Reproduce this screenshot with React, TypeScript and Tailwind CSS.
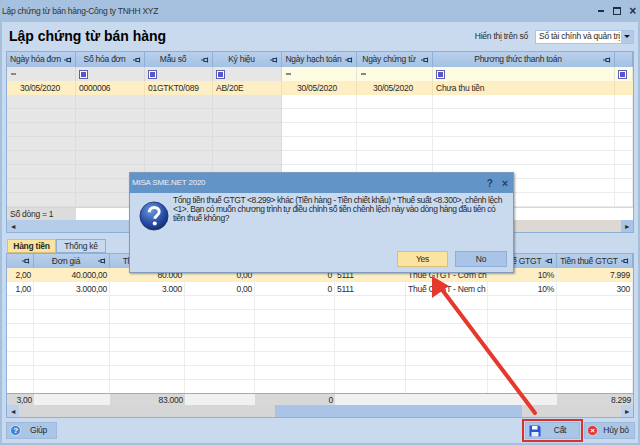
const topCols = 'grid-cols-[69px_69px_68px_69px_75px_76px_182px_18px]';
const botCols = 'grid-cols-[27px_76px_75px_70px_80px_71px_82px_69px_76px]';

function Pin() {
  return (
    <svg viewBox="0 0 8 6" className="w-2 h-[6px] shrink-0">
      <path d="M0 3h3M3 1.500h3.500v3H3zM6.500 0.500v5" fill="none" stroke="#1f3a5f" strokeWidth="1.100" />
    </svg>
  );
}

function Head({ label, pin = true }: { label?: string; pin?: boolean }) {
  return (
    <div className="flex items-center border-r border-[#8fb0d6] bg-gradient-to-b from-[#b9d0ec] to-[#a4c1e3] pr-[3px] min-w-0 overflow-hidden">
      <span className="flex-1 text-center whitespace-nowrap overflow-hidden">{label}</span>
      {pin && <Pin />}
    </div>
  );
}

function FilterIcon() {
  return (
    <span className="w-[9px] h-[9px] ml-[3px] border border-[#5a5fb0] bg-white flex items-center justify-center">
      <span className="w-[5px] h-[5px] bg-[#5a55c8]" />
    </span>
  );
}

function Minus() {
  return <span className="w-[5px] h-[2px] ml-[4px] bg-[#7f8a96]" />;
}

function TopGrid() {
  const grayFilter = 'bg-[#e6e6e6] border-r border-[#d6d6d6] flex items-center';
  const yellowFilter = 'bg-[#fdfbe2] border-r border-[#e6e6d6] flex items-center';
  const blankRows = [0, 1, 2, 3, 4, 5, 6, 7];
  return (
    <div className="border border-[#8fb0d6] h-[182px] flex flex-col bg-white">
      <div className={`grid ${topCols} h-[15px] shrink-0`}>
        <Head label="Ngày hóa đơn" />
        <Head label="Số hóa đơn" />
        <Head label="Mẫu số" />
        <Head label="Ký hiệu" />
        <Head label="Ngày hạch toán" />
        <Head label="Ngày chứng từ" />
        <Head label="Phương thức thanh toán" />
        <Head pin={false} />
      </div>
      <div className={`grid ${topCols} h-[14px] shrink-0`}>
        <div className={grayFilter}><Minus /></div>
        <div className={grayFilter}><FilterIcon /></div>
        <div className={grayFilter}><FilterIcon /></div>
        <div className={grayFilter}><FilterIcon /></div>
        <div className={yellowFilter}><Minus /></div>
        <div className={yellowFilter}><Minus /></div>
        <div className={yellowFilter}><FilterIcon /></div>
        <div className={yellowFilter}><FilterIcon /></div>
      </div>
      <div className={`grid ${topCols} h-[14px] shrink-0 bg-[#fdeec4] leading-[14px]`}>
        <div className="text-right pr-[15px] border-r border-[#f0e0b8]">30/05/2020</div>
        <div className="pl-[3px] border-r border-[#f0e0b8]">0000006</div>
        <div className="pl-[3px] border-r border-[#f0e0b8]">01GTKT0/089</div>
        <div className="pl-[3px] border-r border-[#f0e0b8]">AB/20E</div>
        <div className="text-right pr-[19px] border-r border-[#f0e0b8]">30/05/2020</div>
        <div className="text-right pr-[19px] border-r border-[#f0e0b8]">30/05/2020</div>
        <div className="pl-[3px] border-r border-[#f0e0b8]">Chưa thu tiền</div>
        <div />
      </div>
      <div className="flex-1 overflow-hidden">
        {blankRows.map((r) => (
          <div key={r} className={`grid ${topCols} h-[14px]`}>
            {[0, 1, 2, 3].map((c) => (
              <div key={c} className="bg-[#e6e6e6] border-r border-b border-[#dcdcdc]" />
            ))}
            {[4, 5, 6, 7].map((c) => (
              <div key={c} className="border-r border-b border-[#ececec]" />
            ))}
          </div>
        ))}
      </div>
      <div className={`grid ${topCols} h-[13px] shrink-0 leading-[13px] border-t border-[#c9daef]`}>
        <div className="bg-[#dcdcdc] pl-[3px] whitespace-nowrap">Số dòng = 1</div>
      </div>
      <div className="h-[12px] shrink-0 bg-[#b5cde8] flex items-center">
        <span className="w-[12px] text-[7px] leading-none text-center">◄</span>
        <div className="flex-1" />
        <div className="w-[240px] h-full bg-[#ddd8d2]" />
        <span className="w-[12px] h-full text-[7px] leading-none bg-[#a9c4e6] flex items-center justify-center">►</span>
      </div>
    </div>
  );
}

function BottomGrid() {
  const rows = [
    { cells: ['2,00', '40.000,00', '80.000', '0,00', '0', '5111', 'Thuế GTGT - Cơm ch', '10%', '7.999'], sel: true },
    { cells: ['1,00', '3.000,00', '3.000', '0,00', '0', '5111', 'Thuế GTGT - Nem ch', '10%', '300'], sel: false },
  ];
  const blankRows = [0, 1, 2, 3, 4, 5, 6];
  const left = [5, 6];
  const foot = ['3,00', '', '83.000', '', '0', '', '', '', '8.299'];
  return (
    <div className="border border-[#8fb0d6] h-[165px] flex flex-col bg-white">
      <div className={`grid ${botCols} h-[14px] shrink-0`}>
        <Head />
        <Head label="Đơn giá" />
        <Head label="Thành tiền" />
        <Head label="Tỷ lệ CK" />
        <Head label="Tiền CK" />
        <Head label="TK doanh thu" />
        <Head label="Diễn giải thuế" />
        <Head label="% thuế GTGT" />
        <Head label="Tiền thuế GTGT" />
      </div>
      {rows.map((row) => (
        <div key={row.cells[0]} className={`grid ${botCols} h-[14px] shrink-0 leading-[14px] ${row.sel ? 'bg-[#fdeec4]' : ''}`}>
          {row.cells.map((c, i) => (
            <div key={i} className={`border-r border-b border-[#ececec] px-[2px] whitespace-nowrap overflow-hidden ${left.includes(i) ? 'text-left' : 'text-right'}`}>
              {c}
            </div>
          ))}
        </div>
      ))}
      <div className="flex-1 overflow-hidden">
        {blankRows.map((r) => (
          <div key={r} className={`grid ${botCols} h-[14px]`}>
            {foot.map((_, c) => (
              <div key={c} className="border-r border-b border-[#ececec]" />
            ))}
          </div>
        ))}
      </div>
      <div className={`grid ${botCols} h-[12px] shrink-0 leading-[12px] border-t border-[#8fb0d6]`}>
        {foot.map((c, i) => (
          <div key={i} className={`text-right px-[2px] ${[0, 2, 4, 8].includes(i) ? 'bg-[#d8d8d8]' : 'bg-[#f1f1f1]'}`}>
            {c}
          </div>
        ))}
      </div>
      <div className="h-[12px] shrink-0 bg-[#a9c4e6] flex items-center">
        <span className="w-[12px] text-[7px] leading-none text-center bg-[#bdd2ec] h-full flex items-center justify-center">◄</span>
        <div className="w-[256px] h-full bg-[#d6d6d6]" />
        <div className="flex-1" />
        <div className="w-[99px] h-full bg-[#d6d6d6]" />
        <span className="w-[12px] text-[7px] leading-none bg-[#bdd2ec] h-full flex items-center justify-center">►</span>
      </div>
    </div>
  );
}

function QuestionIcon() {
  return (
    <svg viewBox="0 0 32 32" className="w-[30px] h-[30px] shrink-0">
      <defs>
        <radialGradient id="q" cx="40%" cy="30%" r="75%">
          <stop offset="0%" stopColor="#6f9be0" />
          <stop offset="60%" stopColor="#2b4fa8" />
          <stop offset="100%" stopColor="#12286e" />
        </radialGradient>
      </defs>
      <circle cx="16" cy="16" r="15" fill="url(#q)" stroke="#1a2d6b" strokeWidth="0.800" />
      <path d="M11 12c0-3 2.400-5 5.300-5 3 0 5.200 1.900 5.200 4.500 0 3.800-4.500 3.800-4.500 7.500" fill="none" stroke="#fff" strokeWidth="3.200" />
      <circle cx="16.800" cy="24" r="2.200" fill="#fff" />
    </svg>
  );
}

function Dialog() {
  return (
    <div className="absolute left-[127px] top-[172px] w-[385px] h-[101px] flex flex-col bg-[#c9daef] border border-[#7d9cc0] shadow-[1px_1px_2px_rgba(0,0,0,0.35)]">
      <div className="h-[20px] shrink-0 bg-[#6394c7] flex items-center pl-[2px] pr-[5px] text-[#eaf2fb] text-[8px] tracking-[-0.2px]">
        <span className="flex-1">MISA SME.NET 2020</span>
        <span className="font-bold text-[10px] text-[#28405e] mr-[9px]">?</span>
        <span className="font-bold text-[11px] text-[#28405e]">×</span>
      </div>
      <div className="flex flex-1 pl-[9px] pt-[3px]">
        <div className="pt-[5px] mr-[4px]"><QuestionIcon /></div>
        <div className="text-[8.500px] leading-[9px] tracking-[-0.43px]">
          <div className="whitespace-nowrap">Tổng tiền thuế GTGT &lt;8.299&gt; khác (Tiền hàng - Tiền chiết khấu) * Thuế suất &lt;8.300&gt;, chênh lệch</div>
          <div className="whitespace-nowrap">&lt;1&gt;. Bạn có muốn chương trình tự điều chỉnh số tiền chênh lệch này vào dòng hàng đầu tiên có</div>
          <div className="whitespace-nowrap">tiền thuế không?</div>
        </div>
      </div>
      <div className="flex justify-end gap-[7px] pr-[6px] pb-[5px]">
        <div className="w-[51px] h-[16px] bg-[#fbe3a0] border border-[#d9c07a] flex items-center justify-center">Yes</div>
        <div className="w-[52px] h-[16px] bg-[#a9c4e6] border border-[#8fb0d6] flex items-center justify-center">No</div>
      </div>
    </div>
  );
}

function Arrow() {
  return (
    <svg viewBox="0 0 640 445" className="absolute inset-0 w-[640px] h-[445px] pointer-events-none">
      <path d="M533 413L438 287" stroke="#e5392f" strokeWidth="4" strokeLinecap="round" />
      <path d="M430 276L447 286L430 298Z" fill="#e5392f" />
    </svg>
  );
}

function FootButton({ children, label, boxed }: { children: React.ReactNode; label: string; boxed?: boolean }) {
  return (
    <div className={boxed ? 'border-2 border-[#d8322e] p-[1px]' : ''}>
      <div className={`${boxed ? 'w-[55px]' : 'w-[51px]'} h-[17px] bg-[#aac5e6] border border-[#9dbadd] flex items-center pl-[3px]`}>
        {children}
        <span className="flex-1 text-center">{label}</span>
      </div>
    </div>
  );
}

export default function App() {
  return (
    <div className="relative w-[640px] h-[445px] overflow-hidden bg-[#c9daef] border-x-2 border-b-2 border-[#a5c0dd] text-[8.500px] tracking-[-0.25px] text-[#2b2b2b] font-['Liberation_Sans',sans-serif]">
      <div className="h-[22px] -mx-[2px] bg-[#a5c1df] flex items-center pl-[2px] pr-[4px] text-[#333]">
        <span className="flex-1">Lập chứng từ bán hàng-Công ty TNHH XYZ</span>
        <span className="w-[6px] h-[2px] bg-[#1f2f45] mr-[9px]" />
        <span className="w-[8px] h-[8px] border border-t-2 border-[#1f2f45] mr-[8px]" />
        <span className="font-bold text-[12px] leading-none text-[#1f2f45]">×</span>
      </div>
      <div className="h-[29px] flex items-center pl-[7px]">
        <h1 className="flex-1 font-bold text-[14px] tracking-normal text-black">Lập chứng từ bán hàng</h1>
        <span className="mr-[7px]">Hiển thị trên sổ</span>
        <div className="w-[99px] h-[14px] mr-[4px] bg-white border border-[#a9c4e6] flex items-center pl-[3px] overflow-hidden whitespace-nowrap">
          <span className="flex-1 overflow-hidden">Sổ tài chính và quản trị</span>
          <span className="w-[12px] h-full bg-[#b4cbe8] flex items-center justify-center">
            <span className="w-0 h-0 border-x-[3px] border-x-transparent border-t-[3px] border-t-[#1a1a1a]" />
          </span>
        </div>
      </div>
      <div className="px-[4px]">
        <TopGrid />
        <div className="flex mt-[6px] h-[14px] pl-[1px] items-end">
          <div className="w-[49px] h-[14px] bg-[#fbe3a0] border border-[#d9c07a] font-bold text-center leading-[13px]">Hàng tiền</div>
          <div className="w-[50px] h-[14px] bg-[#c9daef] border border-[#8fb0d6] text-center leading-[13px]">Thống kê</div>
        </div>
        <BottomGrid />
        <div className="flex items-center mt-[1px] h-[23px] -mr-[1px]">
          <FootButton label="Giúp">
            <span className="w-[11px] h-[11px] rounded-full bg-[#3f86d8] border border-[#cfe2f7] text-white text-[8px] leading-[9px] text-center font-bold">?</span>
          </FootButton>
          <div className="flex-1" />
          <FootButton label="Cất" boxed>
            <svg viewBox="0 0 12 12" className="w-[12px] h-[12px]">
              <path d="M0.500 0.500h9.500l1.500 1.500v9.500h-11z" fill="#2a55d8" />
              <rect x="3" y="1" width="5.500" height="3.500" fill="#fff" />
              <rect x="2.500" y="7" width="7" height="4.500" fill="#e8eefc" />
            </svg>
          </FootButton>
          <div className="w-[51px] h-[17px] ml-[1px] bg-[#aac5e6] border border-[#9dbadd] flex items-center pl-[2px]">
            <span className="w-[11px] h-[11px] rounded-full bg-[#d93a3a] border border-[#f4c4c4] text-white text-[8px] leading-[9px] text-center font-bold">×</span>
            <span className="flex-1 text-center whitespace-nowrap">Hủy bỏ</span>
          </div>
        </div>
      </div>
      <Dialog />
      <Arrow />
    </div>
  );
}
